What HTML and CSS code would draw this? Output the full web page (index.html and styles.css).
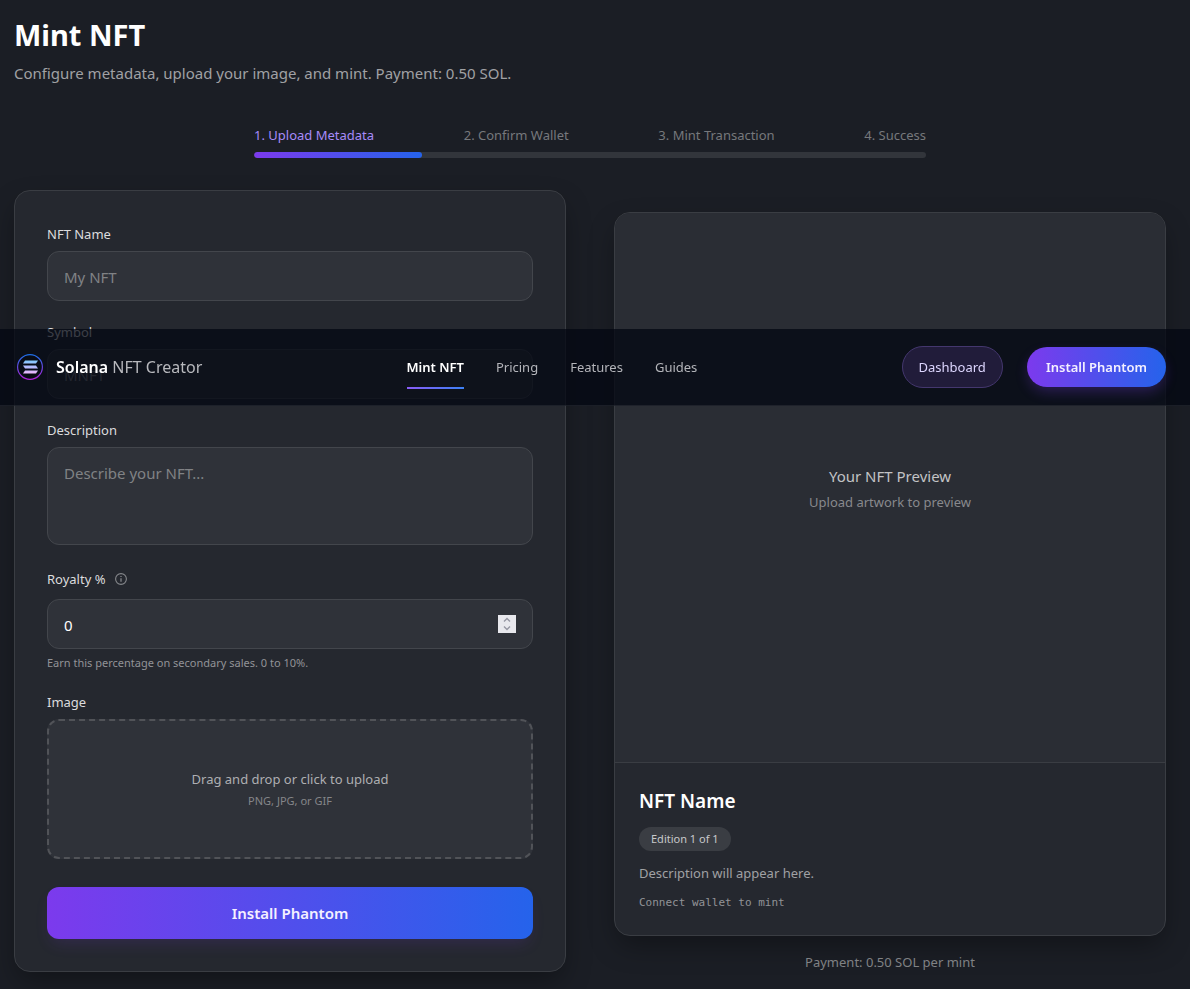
FILE: index.html
```html
<!DOCTYPE html>
<html lang="en">
<head>
  <meta charset="UTF-8">
  <meta name="viewport" content="width=device-width, initial-scale=1.0">
  <title>Mint NFT</title>
  <link rel="stylesheet" href="styles.css">
</head>
<body>
  <header class="site-header">
    <div class="header-inner">
      <a class="brand" href="#">
        <svg class="brand-logo" viewBox="0 0 32 32" aria-hidden="true">
          <defs>
            <linearGradient id="ring" x1="0" y1="0" x2="0" y2="1">
              <stop offset="0" stop-color="#1d6fe8" />
              <stop offset="1" stop-color="#b020d8" />
            </linearGradient>
            <linearGradient id="bars" gradientUnits="userSpaceOnUse" x1="16" y1="9" x2="16" y2="23">
              <stop offset="0" stop-color="#7cc8fa" />
              <stop offset="0.5" stop-color="#b4bcfd" />
              <stop offset="1" stop-color="#f0b8fc" />
            </linearGradient>
          </defs>
          <circle cx="16" cy="16" r="12.4" fill="#080c16" stroke="url(#ring)" stroke-width="1.2" />
          <g fill="url(#bars)">
            <path d="M11 9.5h13l-2 3H9z" />
            <path d="M9 14.5h13l2 3H11z" />
            <path d="M11 19.5h13l-2 3H9z" />
          </g>
        </svg>
        <span class="brand-text"><strong>Solana</strong> NFT Creator</span>
      </a>
      <nav class="site-nav">
        <a class="active" href="#">Mint NFT</a>
        <a href="#">Pricing</a>
        <a href="#">Features</a>
        <a href="#">Guides</a>
      </nav>
      <div class="header-actions">
        <a class="btn-dashboard" href="#">Dashboard</a>
        <button class="btn-wallet" type="button">Install Phantom</button>
      </div>
    </div>
  </header>

  <main class="page">
    <h1>Mint NFT</h1>
    <p class="subtitle">Configure metadata, upload your image, and mint. Payment: 0.50 SOL.</p>

    <div class="steps">
      <div class="step-labels">
        <span class="current">1. Upload Metadata</span>
        <span>2. Confirm Wallet</span>
        <span>3. Mint Transaction</span>
        <span>4. Success</span>
      </div>
      <div class="step-track"><div class="step-fill"></div></div>
    </div>

    <div class="columns">
      <form class="card mint-form" id="mintForm">
        <div class="form-group">
          <label for="name">NFT Name</label>
          <input type="text" id="name" name="name" placeholder="My NFT" />
        </div>
        <div class="form-group">
          <label for="symbol">Symbol</label>
          <input type="text" id="symbol" name="symbol" placeholder="MNFT" />
        </div>
        <div class="form-group description-group">
          <label for="description">Description</label>
          <textarea id="description" name="description" placeholder="Describe your NFT..."></textarea>
        </div>
        <div class="form-group">
          <div class="label-row">
            <label for="royalty">Royalty %</label>
            <svg class="info-icon" viewBox="0 0 14 14" aria-hidden="true">
              <circle cx="7" cy="7" r="5.4" fill="none" stroke="currentColor" stroke-width="1.1" />
              <path d="M7 6.2v3.6M7 3.9v1.2" stroke="currentColor" stroke-width="1.3" />
            </svg>
          </div>
          <input type="number" id="royalty" name="royalty" value="0" min="0" max="10" />
          <p class="hint">Earn this percentage on secondary sales. 0 to 10%.</p>
        </div>
        <div class="form-group">
          <label for="image">Image</label>
          <label class="dropzone" for="image">
            <span class="drop-title">Drag and drop or click to upload</span>
            <span class="drop-types">PNG, JPG, or GIF</span>
          </label>
          <input type="file" id="image" name="image" accept="image/png,image/jpeg,image/gif" hidden />
        </div>
        <button class="btn-submit" type="submit">Install Phantom</button>
      </form>

      <section class="preview">
        <div class="card preview-card">
          <div class="preview-art">
            <p class="art-title">Your NFT Preview</p>
            <p class="art-hint">Upload artwork to preview</p>
          </div>
          <div class="preview-body">
            <h2>NFT Name</h2>
            <span class="badge">Edition 1 of 1</span>
            <p class="preview-description">Description will appear here.</p>
            <p class="preview-wallet">Connect wallet to mint</p>
          </div>
        </div>
        <p class="payment">Payment: 0.50 SOL per mint</p>
      </section>
    </div>
  </main>
</body>
</html>
```
FILE: styles.css
```css
* {
  box-sizing: border-box;
}
body {
  margin: 0;
  padding: 0 10px 0 0;
  font-family: "Segoe UI", "Noto Sans", "Open Sans", sans-serif;
  font-size: 13px;
  line-height: 20px;
  color: #fff;
  background-color: #1b1e25;
}
h1, h2, p {
  margin: 0;
}
a {
  color: inherit;
  text-decoration: none;
}
input, textarea, button {
  font-family: inherit;
}
.page {
  max-width: 1152px;
  margin: 0 auto;
  padding: 17px 0;
}
h1 {
  font-size: 29px;
  line-height: 36px;
  font-weight: 700;
}
.subtitle {
  margin-top: 8px;
  font-size: 15px;
  line-height: 24px;
  color: #a0a1a4;
}

/* progress */
.steps {
  max-width: 672px;
  margin: 40px auto 32px;
}
.step-labels {
  display: flex;
  justify-content: space-between;
  color: #76787c;
}
.step-labels .current {
  color: #a78bfa;
}
.step-track {
  height: 6px;
  margin-top: 7px;
  border-radius: 3px;
  background: #32353b;
  overflow: hidden;
}
.step-fill {
  width: 25%;
  height: 100%;
  border-radius: 3px;
  background: linear-gradient(90deg, #7c3aed, #2563eb);
}

/* form */
.columns {
  display: grid;
  grid-template-columns: 1fr 1fr;
  gap: 48px;
  align-items: end;
}
.card {
  background: #25282f;
  border: 1px solid #3a3d43;
  border-radius: 16px;
  box-shadow: 0 12px 28px -4px rgba(0, 0, 0, 0.36);
}
.mint-form {
  padding: 32px;
}
.form-group {
  margin-bottom: 20px;
}
.form-group label {
  display: block;
  margin-bottom: 6px;
  line-height: 22px;
  color: #dcdcde;
}
.form-group input,
.form-group textarea {
  display: block;
  width: 100%;
  height: 50px;
  padding: 13px 16px 11px;
  border: 1px solid #43464c;
  border-radius: 12px;
  background: #2f3239;
  color: #fff;
  font-size: 15px;
  line-height: 24px;
  outline: none;
}
.form-group input[hidden] {
  display: none;
}
.form-group textarea {
  height: 98px;
  resize: none;
}
.form-group input::placeholder,
.form-group textarea::placeholder {
  color: #808285;
}
.form-group.description-group {
  margin-bottom: 24px;
}
.form-group input[type="number"]::-webkit-inner-spin-button {
  -webkit-appearance: none;
  width: 18px;
  height: 18px;
  opacity: 1;
  background: #e8e8ed url("data:image/svg+xml,%3Csvg xmlns='http://www.w3.org/2000/svg' width='18' height='18' fill='none' stroke='%239697a3' stroke-width='1.4'%3E%3Cpath d='M6 6.5l3-3 3 3M6 11.5l3 3 3-3'/%3E%3C/svg%3E");
}
.label-row {
  display: flex;
  align-items: center;
  gap: 9px;
  height: 20px;
  margin-bottom: 10px;
}
.form-group .label-row label {
  margin: 0;
}
.info-icon {
  width: 14px;
  height: 14px;
  color: #85878b;
}
.hint {
  margin-top: 6px;
  font-size: 11px;
  line-height: 16px;
  color: #929397;
}
.form-group .dropzone {
  display: flex;
  flex-direction: column;
  align-items: center;
  justify-content: center;
  gap: 2px;
  min-height: 140px;
  margin-bottom: 28px;
  border: 2px dashed #515358;
  border-radius: 12px;
  background: #2f3239;
  cursor: pointer;
}
.drop-title {
  color: #aeafb2;
}
.drop-types {
  font-size: 11px;
  line-height: 18px;
  color: #858689;
}
.btn-submit {
  display: block;
  width: 100%;
  height: 52px;
  border: none;
  border-radius: 12px;
  background: linear-gradient(90deg, #7c3aed, #2563eb);
  box-shadow: 0 8px 16px -4px rgba(124, 58, 237, 0.16);
  color: #f4f0ff;
  font-size: 15px;
  font-weight: 600;
  cursor: pointer;
}

/* preview */
.preview-card {
  overflow: hidden;
}
.preview-art {
  display: flex;
  flex-direction: column;
  align-items: center;
  justify-content: center;
  gap: 4px;
  aspect-ratio: 1;
  background: #2a2d34;
  border-bottom: 1px solid #3a3d43;
}
.art-title {
  font-size: 15px;
  line-height: 24px;
  color: #c2c3c5;
}
.art-hint {
  color: #88898d;
}
.preview-body {
  padding: 24px;
}
.preview-body h2 {
  font-size: 19px;
  line-height: 28px;
  font-weight: 600;
}
.badge {
  display: block;
  width: fit-content;
  margin: 12px 0;
  padding: 4px 12px;
  border-radius: 12px;
  background: #3a3d43;
  color: #c8c9cb;
  font-size: 11px;
  line-height: 16px;
}
.preview-description {
  color: #a0a1a4;
}
.preview-wallet {
  margin-top: 12px;
  font-family: "DejaVu Sans Mono", monospace;
  font-size: 11px;
  line-height: 16px;
  color: #929397;
}
.payment {
  margin-top: 16px;
  text-align: center;
  color: #808285;
}

/* floating header */
.site-header {
  position: fixed;
  top: 329px;
  left: 0;
  right: 0;
  z-index: 10;
  padding-right: 10px;
  background: rgba(3, 7, 18, 0.74);
  border-bottom: 1px solid rgba(255, 255, 255, 0.08);
}
.header-inner {
  display: flex;
  align-items: center;
  justify-content: space-between;
  max-width: 1152px;
  height: 76px;
  margin: 0 auto;
}
.brand {
  display: flex;
  align-items: center;
  gap: 10px;
}
.brand-logo {
  width: 32px;
  height: 32px;
}
.brand-text {
  font-size: 16px;
  line-height: 28px;
  color: #b8b9bd;
}
.brand-text strong {
  font-weight: 600;
  color: #fff;
}
.site-nav {
  display: flex;
  gap: 32px;
  color: #b4b5ba;
}
.site-nav a {
  padding: 12px 0 10px;
  border-bottom: 2px solid transparent;
}
.site-nav .active {
  color: #fff;
  font-weight: 600;
  border-image: linear-gradient(90deg, #8b5cf6, #3b82f6) 1;
}
.header-actions {
  display: flex;
  align-items: center;
  gap: 24px;
}
.btn-dashboard {
  padding: 10px 16px;
  border: 1px solid #44376e;
  border-radius: 21px;
  background: #211c3a;
  color: #ddd6fe;
}
.btn-wallet {
  height: 40px;
  padding: 0 19px;
  border: none;
  border-radius: 20px;
  background: linear-gradient(90deg, #7c3aed, #2563eb);
  box-shadow: 0 6px 14px -2px rgba(124, 58, 237, 0.3);
  color: #f4f0ff;
  font-size: 13px;
  font-weight: 600;
  cursor: pointer;
}
```
